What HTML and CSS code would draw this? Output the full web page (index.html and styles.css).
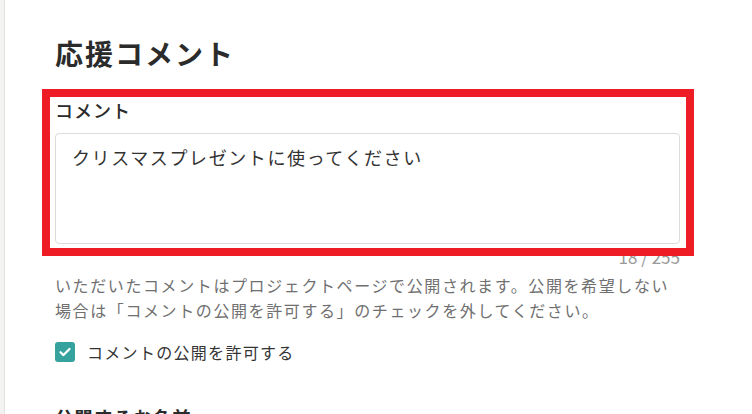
FILE: index.html
```html
<!DOCTYPE html>
<html lang="ja">
<head>
  <meta charset="utf-8">
  <title>応援コメント</title>
  <link rel="stylesheet" href="styles.css">
</head>
<body>
  <div class="page">
    <div class="side"></div>
    <main class="form">
      <h2 class="title">応援コメント</h2>

      <div class="field">
        <label class="label" for="comment">コメント</label>
        <div class="textarea" id="comment">クリスマスプレゼントに使ってください</div>
        <div class="counter">18 / 255</div>
        <div class="highlight"></div>
      </div>

      <p class="help">いただいたコメントはプロジェクトページで公開されます。公開を希望しない場合は「コメントの公開を許可する」のチェックを外してください。</p>

      <label class="check">
        <span class="box">
          <svg width="14" height="14" viewBox="0 0 14 14"><path d="M2.5 7.2l3 2.9 6-6.2" fill="none" stroke="#fff" stroke-width="2.2" stroke-linecap="round" stroke-linejoin="round"/></svg>
        </span>
        コメントの公開を許可する
      </label>

      <h3 class="sub">公開するお名前</h3>
    </main>
  </div>
</body>
</html>
```
FILE: styles.css
```css
body {
  margin: 0;
  font-family: "Noto Sans CJK JP", "Noto Sans", sans-serif;
  color: #333;
  background: #fff;
}

.page {
  display: flex;
  height: 414px;
  overflow: hidden;
}

.side {
  width: 4px;
  flex: none;
  background: #f3f3f1;
  border-right: 1px solid #e2e2e0;
}

.form {
  width: 625px;
  padding: 33px 0 0 50px;
}

.title {
  margin: 0;
  font-size: 28px;
  line-height: 40px;
  font-weight: 700;
  letter-spacing: 2px;
  color: #2b2b2b;
}

.field {
  position: relative;
  margin-top: 24px;
}

.label {
  display: block;
  font-size: 18px;
  line-height: 26px;
  font-weight: 500;
  letter-spacing: 1px;
  color: #2b2b2b;
}

.textarea {
  margin-top: 10px;
  height: 91px;
  padding: 9px 16px;
  border: 1px solid #dcdcdc;
  border-radius: 4px;
  font-size: 18px;
  line-height: 28px;
  letter-spacing: 1.6px;
  color: #333;
}

.counter {
  margin-top: 2px;
  text-align: right;
  font-size: 17px;
  line-height: 22px;
  color: #999;
}

.highlight {
  position: absolute;
  left: -13px;
  top: -8px;
  width: 636px;
  height: 151px;
  border: 8px solid #ee1c25;
}

.help {
  width: 620px;
  margin: 5px 0 0;
  font-size: 16px;
  line-height: 25px;
  letter-spacing: 1.6px;
  color: #707070;
}

.check {
  display: flex;
  align-items: center;
  gap: 12px;
  margin-top: 19px;
  font-size: 16px;
  line-height: 20px;
  letter-spacing: 1.3px;
  color: #333;
}

.box {
  width: 20px;
  height: 20px;
  border-radius: 3px;
  background: #35a29d;
  display: flex;
  align-items: center;
  justify-content: center;
}

.sub {
  margin: 42px 0 0;
  font-size: 18px;
  line-height: 26px;
  font-weight: 700;
  letter-spacing: 1.6px;
  color: #2b2b2b;
}
```
